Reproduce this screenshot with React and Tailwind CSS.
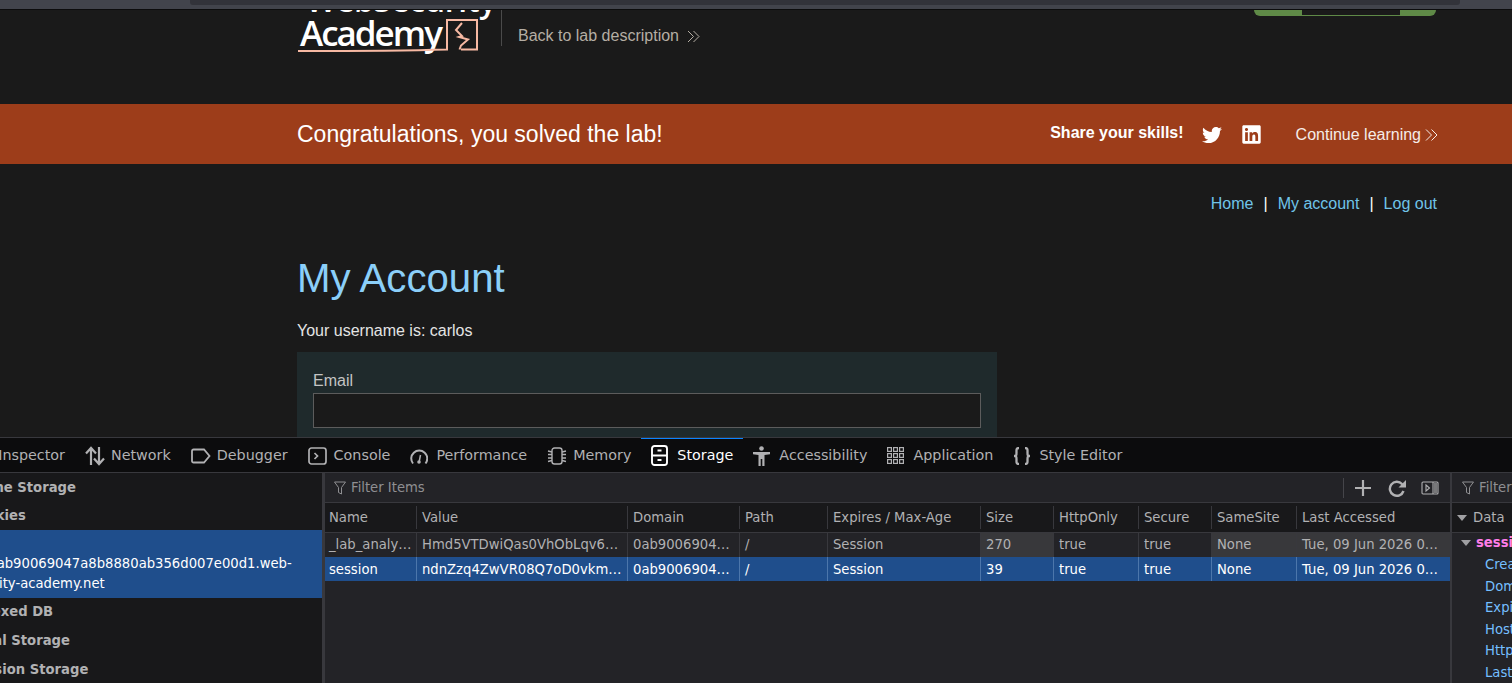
import { FaTwitter, FaLinkedin } from "react-icons/fa";

const ui = "font-['DejaVu_Sans',sans-serif]";

const Chevrons = ({ className }) => (
  <svg viewBox="0 0 13 13" className={className} fill="none" stroke="currentColor" strokeWidth="1">
    <path d="M1 1l5.5 5.5L1 12M6.5 1L12 6.5 6.5 12" />
  </svg>
);

const NetworkIcon = () => (
  <svg viewBox="0 0 20 20" className="w-[20px] h-[20px] -mr-[4px] shrink-0" fill="none" stroke="currentColor" strokeWidth="2.200">
    <path d="M6 19V2M1 7.500L6 2l5 5.500M14 1v17M9 12.500l5 5.500 5-5.500" />
  </svg>
);
const DebuggerIcon = () => (
  <svg viewBox="0 0 20 16" className="w-[20px] h-4 shrink-0 -mr-[4px]" fill="none" stroke="currentColor" strokeWidth="1.800">
    <path d="M2.500 1.500h10.500l5.500 6.500-5.500 6.500H2.500A1.500 1.500 0 0 1 1 13V3a1.500 1.500 0 0 1 1.500-1.500z" />
  </svg>
);
const ConsoleIcon = () => (
  <svg viewBox="0 0 19 18" className="w-[19px] h-[18px] shrink-0 -mr-[3px]" fill="none" stroke="currentColor" strokeWidth="1.700">
    <rect x="1" y="1" width="17" height="16" rx="2.500" />
    <path d="M6.500 6l3 3-3 3" />
  </svg>
);
const PerformanceIcon = () => (
  <svg viewBox="0 0 18 18" className="w-[18px] h-[18px] shrink-0 -mr-[2px]" fill="none" stroke="currentColor" strokeWidth="2">
    <path d="M3 16.500A8 8 0 1 1 15.500 16.500" />
    <path d="M10.500 8L9.300 14" strokeWidth="1.500" />
    <circle cx="9" cy="15" r="1.800" fill="currentColor" stroke="none" />
  </svg>
);
const MemoryIcon = () => (
  <svg viewBox="0 0 20 18" className="w-[20px] h-[18px] shrink-0 -mr-[4px]" fill="none" stroke="currentColor" strokeWidth="1.400">
    <rect x="5" y="1" width="10" height="16" rx="2.500" />
    <path d="M1 4l4 1M1 7.500h4M1 11h4M1 14.500l4-1M15 5l4-1M15 7.500h4M15 11h4M15 13.500l4 1" />
  </svg>
);
const StorageIcon = () => (
  <svg viewBox="0 0 17 21" className="w-[17px] h-[21px] shrink-0 -mr-[1px]" fill="none" stroke="currentColor" strokeWidth="1.900">
    <rect x="1" y="1" width="15" height="19" rx="2.500" />
    <path d="M1 10.500h15M6.500 5.500h4M6.500 15h4" />
  </svg>
);
const AccessibilityIcon = () => (
  <svg viewBox="0 0 17 20" className="w-[17px] h-[20px] shrink-0 -mr-[1px]" fill="currentColor">
    <circle cx="8.500" cy="2.500" r="2.300" />
    <path d="M0 6h17v2.200l-5.500.8V20H9.300v-7H7.700v7H5.500V9L0 8.200z" />
  </svg>
);
const ApplicationIcon = () => (
  <svg viewBox="0 0 17 17" className="w-[17px] h-[17px] shrink-0 -mr-[1px]" fill="none" stroke="currentColor" strokeWidth="1.200">
    {[0, 6, 12].map((y) =>
      [0, 6, 12].map((x) => <rect key={`${x}-${y}`} x={x + 0.6} y={y + 0.6} width="3.800" height="3.800" />)
    )}
  </svg>
);
const BracesIcon = () => (
  <svg viewBox="0 0 18 18" className="w-[18px] h-[18px] shrink-0 -mr-[2px]" fill="none" stroke="currentColor" strokeWidth="2.300">
    <path d="M6 1C3 1 3.500 3 3.500 5.500S3.500 9 1 9c2.500 0 2.500 1 2.500 3.500S3 17 6 17M12 1c3 0 2.500 2 2.500 4.500S14.500 9 17 9c-2.500 0-2.500 1-2.500 3.500S15 17 12 17" />
  </svg>
);
const FilterIcon = () => (
  <svg viewBox="0 0 12 14" className="w-3 h-[14px] shrink-0" fill="none" stroke="currentColor" strokeWidth="1">
    <path d="M.5 1h11L7.500 6.500V13l-3-1.500v-5z" />
  </svg>
);

const tabs = [
  { label: "Network", icon: <NetworkIcon /> },
  { label: "Debugger", icon: <DebuggerIcon /> },
  { label: "Console", icon: <ConsoleIcon /> },
  { label: "Performance", icon: <PerformanceIcon /> },
  { label: "Memory", icon: <MemoryIcon /> },
  { label: "Storage", icon: <StorageIcon />, active: true },
  { label: "Accessibility", icon: <AccessibilityIcon /> },
  { label: "Application", icon: <ApplicationIcon /> },
  { label: "Style Editor", icon: <BracesIcon /> },
];

const columns = [
  { name: "Name", w: "w-[91px]", first: true },
  { name: "Value", w: "w-[211px]" },
  { name: "Domain", w: "w-[112px]" },
  { name: "Path", w: "w-[88px]" },
  { name: "Expires / Max-Age", w: "w-[153px]" },
  { name: "Size", w: "w-[73px]" },
  { name: "HttpOnly", w: "w-[85px]" },
  { name: "Secure", w: "w-[73px]" },
  { name: "SameSite", w: "w-[85px]" },
  { name: "Last Accessed", w: "flex-1" },
];

const cookies = [
  {
    cells: ["_lab_analy…", "Hmd5VTDwiQas0VhObLqv6…", "0ab9006904…", "/", "Session", "270", "true", "true", "None", "Tue, 09 Jun 2026 0…"],
    hover: [5, 8, 9],
  },
  {
    cells: ["session", "ndnZzq4ZwVR08Q7oD0vkm…", "0ab9006904…", "/", "Session", "39", "true", "true", "None", "Tue, 09 Jun 2026 0…"],
    selected: true,
    hover: [],
  },
];

const TreeRow = ({ label, className }) => (
  <div className={`flex items-center font-bold text-[#b1b1b3] whitespace-nowrap ${className}`}>
    <span className="-ml-[32px]">{label}</span>
  </div>
);

const App = () => {
  return (
    <div className="w-[1512px] h-[683px] overflow-hidden flex flex-col bg-[#1a1a1a] font-['Liberation_Sans',sans-serif]">
      {/* browser strip */}
      <div className="h-[10px] shrink-0 bg-[#42444c] border-b border-[#0c0c0d] pl-[190px] pr-[52px]">
        <div className="h-[5px] bg-[#32333a] rounded-b-[3px]" />
      </div>

      {/* lab page */}
      <div className="h-[427px] shrink-0 overflow-hidden">
        <header className="h-[94px] pl-[297px] pr-[76px] flex items-start justify-between overflow-hidden">
          <div className="flex items-start">
            <div className="relative w-[204px] h-[44px] -mt-[27px] flex flex-col text-white font-['Open_Sans',sans-serif]">
              <div className="text-[32px] leading-[34px] font-semibold pl-[9px] tracking-[-.3px] whitespace-nowrap">WebSecurity</div>
              <div className="pl-[3px] h-[42px] -mt-[3px]">
                <span className="text-[35px] leading-[38px] font-semibold tracking-[-2px] whitespace-nowrap">Academy</span>
              </div>
              <svg viewBox="0 0 182 36" className="absolute left-0 top-[35px] w-[182px] h-[36px]" fill="none" stroke="#f7b9a3" strokeWidth="2">
                <path d="M1 33C50 33 100 33 150 31.500V2h30v29.500h-16" />
                <path d="M165 5l-6 7 6 6-3 1 9 2.500-7 6-1.500 4" />
              </svg>
            </div>
            <div className="w-px h-[36px] bg-[#4a4a4a]" />
            <a className="ml-[16px] mt-[16px] text-[16px] leading-5 text-[#b5aea4] flex items-center gap-[8px]">
              Back to lab description
              <Chevrons className="w-[13px] h-[13px]" />
            </a>
          </div>
          <div className="w-[182px] h-[6px] bg-[#5f8a47] rounded-b-[18px] pl-[48px]">
            <div className="w-[98px] h-[5px] bg-[#1a1a1a]" />
          </div>
        </header>

        <div className="h-[60px] bg-[#9d3d1a] pl-[297px] pr-[74px] pt-[2px] flex items-center justify-between text-white">
          <div className="text-[23px] -mt-[2px]">Congratulations, you solved the lab!</div>
          <div className="flex items-center">
            <span className="font-bold text-[16px] -mt-[4px]">Share your skills!</span>
            <FaTwitter className="w-[20px] h-[20px] ml-[18px] -mt-px" />
            <FaLinkedin className="w-[21px] h-[21px] ml-[19px] -mt-px" />
            <a className="ml-[34px] text-[16px] flex items-center gap-[4px] text-[#f5ece8]">
              Continue learning
              <Chevrons className="w-[13px] h-[14px]" />
            </a>
          </div>
        </div>

        <div className="pl-[297px] pr-[75px]">
          <nav className="pt-[30px] flex justify-end gap-[10px] text-[16px] leading-[20px] text-white">
            <a className="text-[#70c4e8]">Home</a>
            <span>|</span>
            <a className="text-[#70c4e8]">My account</a>
            <span>|</span>
            <a className="text-[#70c4e8]">Log out</a>
          </nav>
          <h1 className="mt-[40px] text-[40.200px] leading-[50px] text-[#8bcff9]">My Account</h1>
          <p className="mt-[17px] text-[16px] leading-5 text-[#e4e4e4]">Your username is: carlos</p>
          <div className="mt-[11px] w-[700px] h-[100px] bg-[#1f2a2c] px-4 pt-[19px]">
            <label className="block text-[16px] leading-5 text-[#c4c4c4]">Email</label>
            <div className="mt-[2px] h-[35px] border border-[#5c5c5c] bg-[#1a1a1a]" />
          </div>
        </div>
      </div>

      {/* devtools */}
      <div className={`flex-1 min-h-0 flex flex-col border-t border-[#38383d] text-[13.200px] ${ui}`}>
        <div className="h-[35px] shrink-0 bg-[#0c0c0d] border-b border-[#38383d] flex items-stretch text-[14.320px] text-[#b1b1b3] overflow-hidden">
          <div className="w-[75px] shrink-0 flex items-center justify-end pr-[10px] pt-[1px] whitespace-nowrap">Inspector</div>
          {tabs.map((tab) => (
            <div
              key={tab.label}
              className={`px-[10px] gap-[10px] flex items-center whitespace-nowrap border-t-2 -mt-px ${
                tab.active ? "border-[#0a84ff] text-white" : "border-transparent"
              }`}
            >
              {tab.icon}
              {tab.label}
            </div>
          ))}
        </div>

        <div className="flex-1 min-h-0 flex">
          {/* storage tree */}
          <aside className="w-[322px] shrink-0 bg-[#18181a] overflow-hidden">
            <TreeRow label="Cache Storage" className="h-[28px] pt-[1px]" />
            <TreeRow label="Cookies" className="h-[29px]" />
            <div className="h-[68px] bg-[#1f4e8c] text-white flex flex-col justify-end pb-[4px] whitespace-nowrap leading-[20px]">
              <div className="-ml-[59px]">https://0ab90069047a8b8880ab356d007e00d1.web-</div>
              <div className="-ml-[37px]">security-academy.net</div>
            </div>
            <TreeRow label="Indexed DB" className="h-[29px] -mt-px" />
            <TreeRow label="Local Storage" className="h-[29px]" />
            <TreeRow label="Session Storage" className="h-[29px]" />
          </aside>
          <div className="w-[3px] shrink-0 bg-[#38383d]" />

          {/* cookie table */}
          <section className="w-[1125px] shrink-0 bg-[#232327] flex flex-col">
            <div className="h-[30px] shrink-0 border-b border-[#38383d] flex items-center pl-[9px] pr-[11px] text-[#8f8f92]">
              <FilterIcon />
              <span className="ml-[5px]">Filter Items</span>
              <div className="ml-auto flex items-center text-[#b1b1b3]">
                <div className="w-px h-[20px] bg-[#45454a] mr-[10px]" />
                <svg viewBox="0 0 18 18" className="w-[18px] h-[18px]" fill="none" stroke="currentColor" strokeWidth="2.200">
                  <path d="M9 1v16M1 9h16" />
                </svg>
                <svg viewBox="0 0 20 18" className="w-[20px] h-[18px] ml-[15px]" fill="none" stroke="currentColor" strokeWidth="2.400">
                  <path d="M16.500 12a7 7 0 1 1-1.500-7l2 2" />
                  <path d="M19 1v7.500h-7.500z" fill="currentColor" stroke="none" />
                </svg>
                <svg viewBox="0 0 18 16" className="w-[18px] h-4 ml-[14px]" fill="none" stroke="currentColor" strokeWidth="1.100">
                  <rect x="1" y="2" width="16" height="12" rx="1" />
                  <path d="M12 2v12M5 5l3.500 3L5 11z" />
                  <path d="M13 3h3v10h-3z" fill="currentColor" stroke="none" opacity=".6" />
                </svg>
              </div>
            </div>
            <div className="h-[30px] shrink-0 bg-[#18181a] border-b border-[#38383d] flex text-[#b1b1b3]">
              {columns.map((col) => (
                <div key={col.name} className={`${col.w} my-[3px] flex items-center whitespace-nowrap ${col.first ? "pl-[4px]" : "pl-[5px] border-l border-[#38383d]"}`}>
                  {col.name}
                </div>
              ))}
            </div>
            {cookies.map((row) => (
              <div key={row.cells[0]} className={`h-[24px] shrink-0 flex ${row.selected ? "bg-[#1f4e8c] text-white" : "text-[#b1b1b3]"}`}>
                {row.cells.map((cell, i) => (
                  <div
                    key={i}
                    className={`${columns[i].w} flex items-center whitespace-nowrap overflow-hidden ${row.selected ? "pt-[1px]" : "pb-[1px]"} ${
                      i === 0 ? "pl-[4px]" : `pl-[5px] border-l ${row.selected ? "border-[#4c76ab]" : "border-[#38383d]"}`
                    } ${row.hover.includes(i) ? "bg-[#38383b]" : ""}`}
                  >
                    {cell}
                  </div>
                ))}
              </div>
            ))}
          </section>
          <div className="w-[2px] shrink-0 bg-[#38383d]" />

          {/* sidebar */}
          <aside className="flex-1 min-w-0 bg-[#232327] overflow-hidden whitespace-nowrap">
            <div className="h-[30px] border-b border-[#38383d] flex items-center pl-[10px] text-[#8f8f92]">
              <FilterIcon />
              <span className="ml-[5px]">Filter values</span>
            </div>
            <div className="h-[30px] bg-[#18181a] border-b border-[#38383d] flex items-center pl-[5px] text-[#b1b1b3]">
              <span className="w-0 h-0 border-x-[5px] border-x-transparent border-t-[6px] border-t-[#a0a0a3]" />
              <span className="ml-[6px]">Data</span>
            </div>
            <div className="h-[19px] mb-[2px] flex items-center pl-[9px]">
              <span className="w-0 h-0 border-x-[5px] border-x-transparent border-t-[6px] border-t-[#a0a0a3]" />
              <span className="ml-[5px] font-bold text-[#ff7de9]">session</span>
            </div>
            <div className="pl-[33px] text-[#75bfff] leading-[21.500px]">
              <div>Created</div>
              <div>Domain</div>
              <div>Expires</div>
              <div>HostOnly</div>
              <div>HttpOnly</div>
              <div>Last Accessed</div>
            </div>
          </aside>
        </div>
      </div>
    </div>
  );
};

export default App;
